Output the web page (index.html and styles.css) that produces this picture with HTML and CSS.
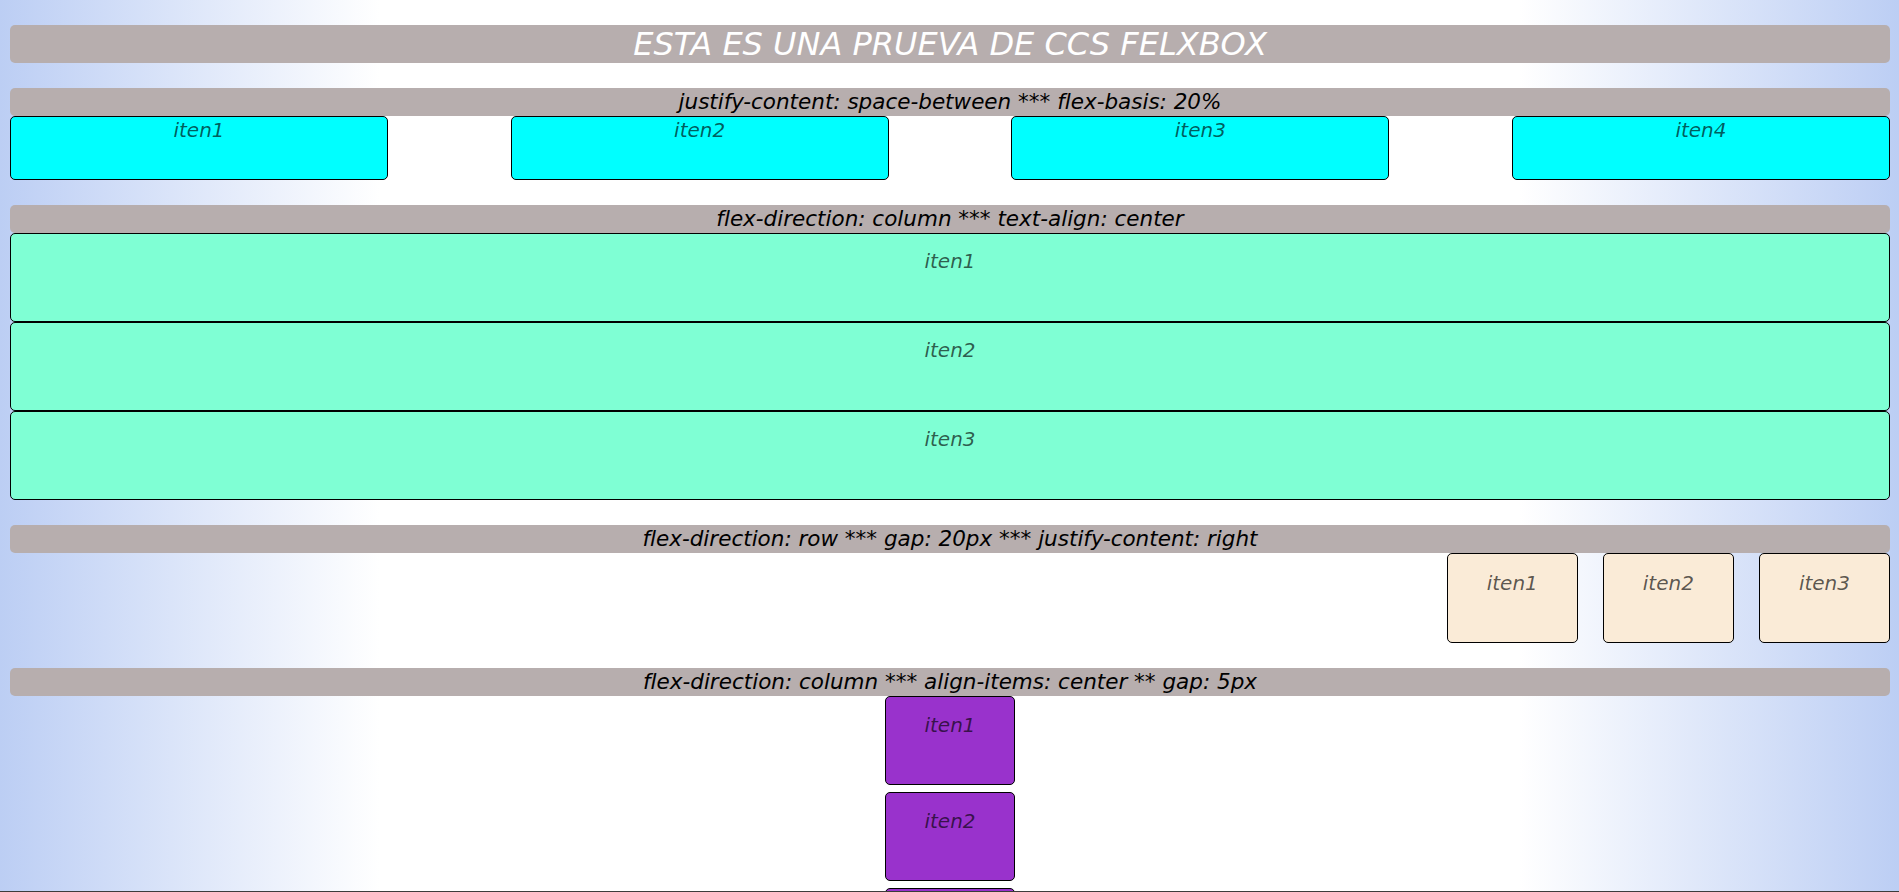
FILE: index.html
```html
<!DOCTYPE html>
<html lang="es">
<head>
<meta charset="utf-8">
<title>Prueba de CSS Flexbox</title>
<link rel="stylesheet" href="styles.css">
</head>
<body>
<h1 class="title">ESTA ES UNA PRUEVA DE CCS FELXBOX</h1>

<section class="demo">
  <h2 class="label">justify-content: space-between *** flex-basis: 20%</h2>
  <div class="flex between">
    <div class="item cyan">iten1</div>
    <div class="item cyan">iten2</div>
    <div class="item cyan">iten3</div>
    <div class="item cyan">iten4</div>
  </div>
</section>

<section class="demo">
  <h2 class="label">flex-direction: column *** text-align: center</h2>
  <div class="flex column">
    <div class="item aqua">iten1</div>
    <div class="item aqua">iten2</div>
    <div class="item aqua">iten3</div>
  </div>
</section>

<section class="demo">
  <h2 class="label">flex-direction: row *** gap: 20px *** justify-content: right</h2>
  <div class="flex row-right">
    <div class="item cream">iten1</div>
    <div class="item cream">iten2</div>
    <div class="item cream">iten3</div>
  </div>
</section>

<section class="demo">
  <h2 class="label">flex-direction: column *** align-items: center ** gap: 5px</h2>
  <div class="flex column-center">
    <div class="item orchid">iten1</div>
    <div class="item orchid">iten2</div>
    <div class="item orchid">iten3</div>
  </div>
</section>

<div class="bottom-edge"></div>
</body>
</html>
```

FILE: styles.css
```css
html {
  min-height: 100%;
  background: linear-gradient(to right, #bccef4 0%, #ffffff 20%, #ffffff 80%, #bccef4 100%);
  background-attachment: fixed;
}

body {
  margin: 25px 9px 0 10px;
  font-family: "DejaVu Sans", "Liberation Sans", sans-serif;
  font-style: italic;
}

.title {
  margin: 0 0 25px;
  height: 38px;
  line-height: 38px;
  background: #b7aeae;
  border-radius: 5px;
  color: #ffffff;
  font-size: 32px;
  font-weight: normal;
  font-style: italic;
  text-align: center;
}

.demo {
  margin-bottom: 25px;
}

.label {
  margin: 0;
  height: 28px;
  line-height: 28px;
  background: #b7aeae;
  border-radius: 5px;
  color: #000000;
  font-size: 21.5px;
  font-weight: normal;
  font-style: italic;
  text-align: center;
}

.flex {
  display: flex;
}

.item {
  border: 1px solid #000000;
  border-radius: 5px;
  color: rgba(0, 0, 0, 0.65);
  font-size: 20px;
  text-align: center;
}

.between {
  justify-content: space-between;
}

.cyan {
  flex-basis: 20%;
  height: 62px;
  line-height: 27px;
  background: #00ffff;
}

.column {
  flex-direction: column;
}

.aqua {
  box-sizing: border-box;
  height: 89px;
  padding-top: 15px;
  background: #7fffd4;
}

.row-right {
  justify-content: flex-end;
  gap: 25px;
}

.cream {
  box-sizing: border-box;
  height: 90px;
  padding: 17px 39px 0;
  background: #faebd7;
}

.column-center {
  flex-direction: column;
  align-items: center;
  gap: 7px;
}

.orchid {
  box-sizing: border-box;
  height: 89px;
  padding: 16px 38px 0;
  background: #9932cc;
}

.bottom-edge {
  position: fixed;
  left: 0;
  right: 0;
  bottom: 0;
  height: 1px;
  background: #3c3c3c;
}
```
